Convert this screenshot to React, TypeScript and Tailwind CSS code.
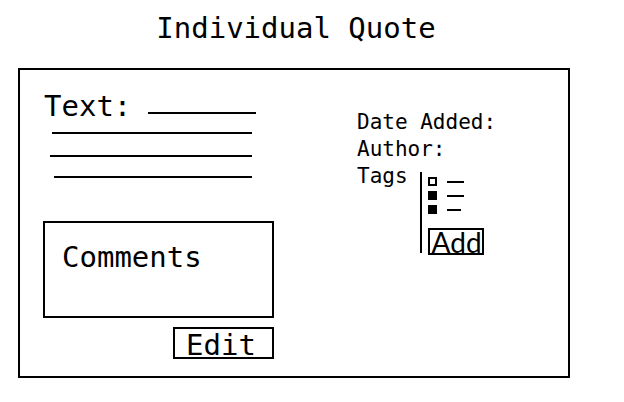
import React from "react";

const mono = { fontFamily: '"DejaVu Sans Mono", monospace' };

const Rule: React.FC<{ className: string }> = ({ className }) => (
  <div className={`h-[2px] bg-black ${className}`} />
);

const TagItem: React.FC<{ filled?: boolean; dash: string; first?: boolean }> = ({
  filled,
  dash,
  first,
}) => (
  <div className={`flex items-center h-[9px] ${first ? "" : "mt-[5px]"}`}>
    <div
      className={`w-[9px] h-[9px] border-2 border-black box-border ${filled ? "bg-black" : "bg-white"}`}
    />
    <div className={`ml-[10px] h-[2px] bg-black ${dash}`} />
  </div>
);

const App: React.FC = () => {
  return (
    <div className="w-[624px] h-[402px] bg-white text-black overflow-hidden" style={mono}>
      <h1 className="ml-[20px] w-[552px] pt-[14px] text-center text-[29px] leading-none font-normal">
        Individual Quote
      </h1>

      <div className="ml-[18px] mt-[25px] w-[552px] h-[310px] border-2 border-black box-border flex">
        {/* left: quote text, comments, edit */}
        <div className="w-[256px] shrink-0 pl-[24px] pt-[22px]">
          <div className="flex items-start">
            <span className="text-[29px] leading-none">Text:</span>
            <Rule className="ml-[17px] mt-[20px] w-[108px]" />
          </div>
          <Rule className="mt-[11px] ml-[8px] w-[200px]" />
          <Rule className="mt-[21px] ml-[6px] w-[202px]" />
          <Rule className="mt-[19px] ml-[10px] w-[198px]" />

          <div className="mt-[43px] -ml-[1px] w-[231px] h-[97px] border-2 border-black box-border pl-[17px] pt-[20px]">
            <span className="text-[29px] leading-none block">Comments</span>
          </div>

          <div className="mt-[9px] ml-[129px] w-[101px] h-[32px] border-2 border-black box-border pl-[11px] pt-[2px]">
            <span className="text-[29px] leading-none block">Edit</span>
          </div>
        </div>

        {/* right: metadata and tags */}
        <div className="ml-[81px] pt-[39px] text-[21px] leading-[27px]">
          <div>Date Added:</div>
          <div>Author:</div>
          <div className="flex items-start">
            <span>Tags</span>
            <div className="ml-[12px] mt-[9px] w-[2px] h-[81px] bg-black" />
            <div className="ml-[6px] mt-[14px] flex flex-col">
              <TagItem first dash="w-[17px]" />
              <TagItem filled dash="w-[17px]" />
              <TagItem filled dash="w-[14px]" />
              <div
                className="mt-[14px] w-[56px] h-[27px] border-2 border-black box-border pl-[2px] text-[28px] leading-[25px]"
                style={{ fontFamily: 'Lato, "Open Sans", sans-serif' }}
              >
                Add
              </div>
            </div>
          </div>
        </div>
      </div>
    </div>
  );
};

export default App;
